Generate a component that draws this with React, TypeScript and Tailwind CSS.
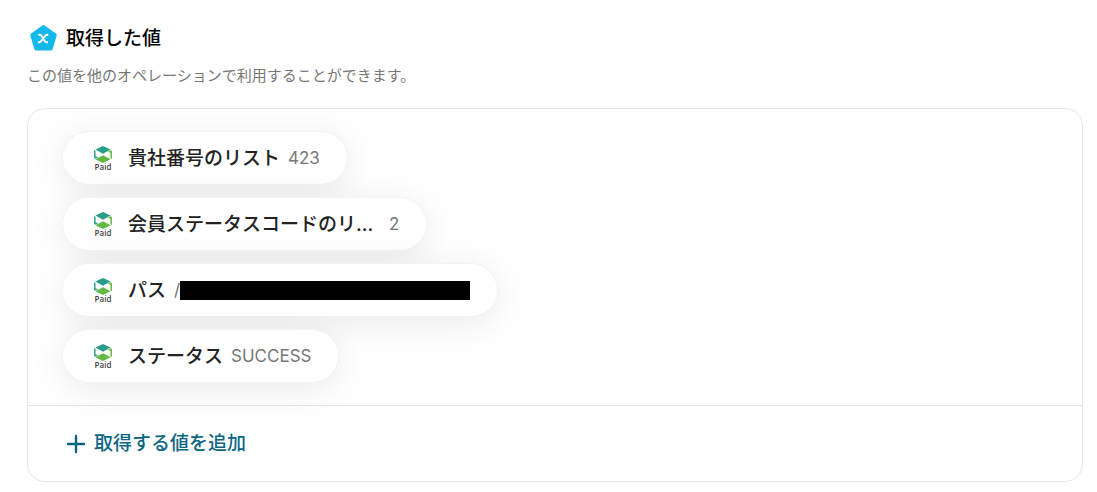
import type { ReactNode } from "react";

type OutputValue = {
  id: string;
  label: string;
  value: string;
  masked?: boolean;
};

const outputs: OutputValue[] = [
  { id: "ids", label: "貴社番号のリスト", value: "423" },
  { id: "codes", label: "会員ステータスコードのリ...", value: "2" },
  { id: "path", label: "パス", value: "/", masked: true },
  { id: "status", label: "ステータス", value: "SUCCESS" },
];

function VariableIcon() {
  return (
    <svg width="28" height="28" viewBox="0 0 28 28" aria-hidden="true">
      <path
        d="M13.5 2 24.7 10.2 20.7 23.6H6.3L2.3 10.2Z"
        fill="#14b9ec"
        stroke="#14b9ec"
        strokeWidth="4"
        strokeLinejoin="round"
      />
      <path
        d="M9 9.8h.8c.7 0 1.2.3 1.6 1l3.4 5.4c.4.7.9 1 1.6 1h.8M17.6 9.8c-1 0-1.6.2-2.2.9l-4.6 5.6c-.6.7-1.2.9-2.2.9"
        fill="none"
        stroke="#fff"
        strokeWidth="1.9"
        strokeLinecap="round"
      />
    </svg>
  );
}

function PaidLogo() {
  return (
    <svg width="22" height="28" viewBox="0 0 22 28" role="img" aria-label="Paid">
      <path d="M11 2 18.6 5.6 11 9.8 3.4 5.6Z" fill="#2a9d88" />
      <path d="M2 6 3.6 6.8V12L6 13.4 3.6 14.8 2 14Z" fill="#3aa98f" />
      <path d="M11 11.2 18.6 15.2 11 19 3.4 15.2Z" fill="#62b946" />
      <path d="M20 15 18.4 14.2V9L16 7.6 18.4 6.2 20 7Z" fill="#6cbd45" />
      <text
        x="11"
        y="26.4"
        textAnchor="middle"
        fontFamily="'Open Sans', sans-serif"
        fontSize="8"
        fontWeight="600"
        fill="#444"
      >
        Paid
      </text>
    </svg>
  );
}

function PlusIcon() {
  return (
    <svg width="20" height="20" viewBox="0 0 20 20" aria-hidden="true">
      <path d="M10 2v16M2 10h16" stroke="#0b6683" strokeWidth="2.4" strokeLinecap="round" />
    </svg>
  );
}

function Pill({ children }: { children: ReactNode }) {
  return (
    <li className="flex h-[54px] max-w-full items-center rounded-full border border-[#f3f3f3] bg-white pr-[27px] pl-[29px] shadow-[0_6px_36px_rgba(0,0,0,0.09)]">
      {children}
    </li>
  );
}

export default function App() {
  return (
    <main className="bg-white pt-6 pr-3.5 pb-2.5 pl-[27px] font-[Inter,'Noto_Sans_CJK_JP',sans-serif] text-[#222]">
      <header>
        <div className="flex h-[30px] items-center gap-2 pl-[3px]">
          <VariableIcon />
          <h1 className="text-[19px] leading-7 font-medium text-black">取得した値</h1>
        </div>
        <p className="mt-2.5 text-[15px] leading-6 text-[#777]">
          この値を他のオペレーションで利用することができます。
        </p>
      </header>

      <section className="mt-5 overflow-hidden rounded-[18px] border border-[#e5e5e5]">
        <ul className="flex flex-col items-start gap-3 px-[34px] pt-[22px] pb-[22px]">
          {outputs.map((output) => (
            <Pill key={output.id}>
              <PaidLogo />
              <span className="ml-3.5 text-[19px] leading-[29px] font-medium whitespace-nowrap">
                {output.label}
              </span>
              <span className="ml-2 flex min-w-[18px] items-center justify-end text-[17px] leading-6 text-[#777]">
                {output.value}
                {output.masked && <span className="h-[19px] w-[290px] bg-black" />}
              </span>
            </Pill>
          ))}
        </ul>
        <div className="border-t border-[#e5e5e5] px-[38px] py-[23px]">
          <button
            type="button"
            className="flex items-center gap-2 text-[19px] leading-[29px] font-medium text-[#0b6683]"
          >
            <PlusIcon />
            取得する値を追加
          </button>
        </div>
      </section>
    </main>
  );
}
